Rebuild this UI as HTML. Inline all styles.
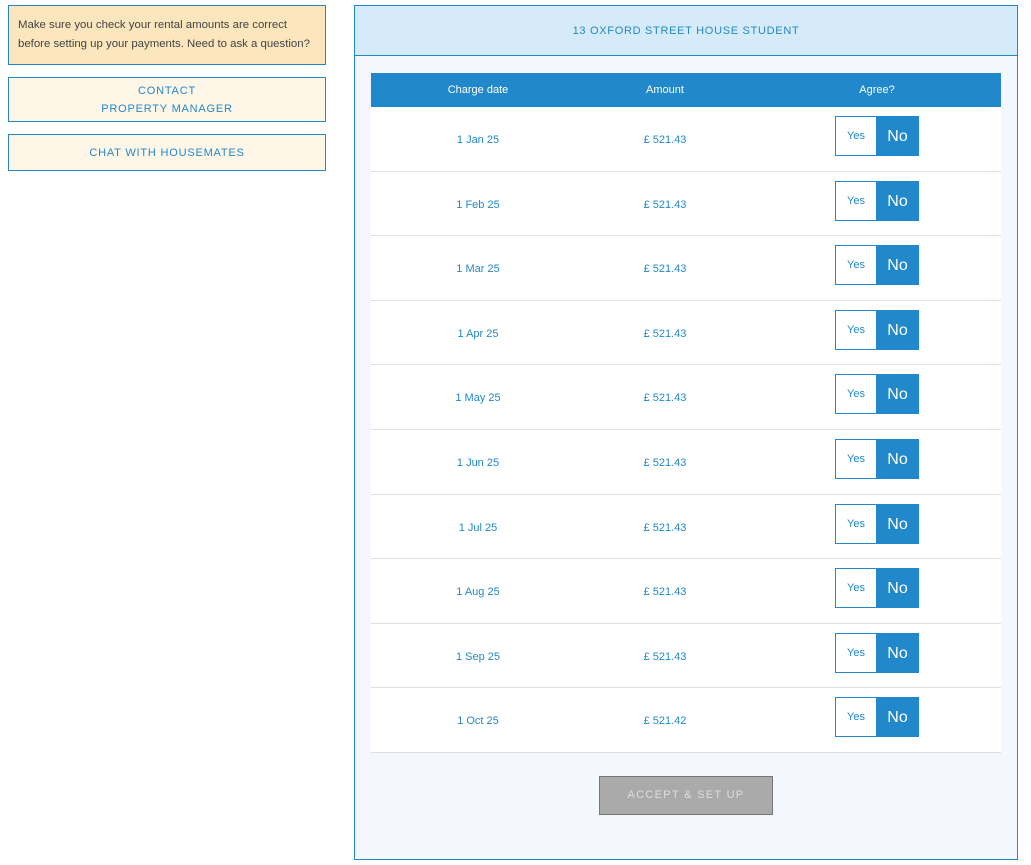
<!DOCTYPE html>
<html><head><meta charset="utf-8"><style>
*{box-sizing:border-box;margin:0;padding:0}
body{width:1031px;height:865px;background:#fff;font-family:"Liberation Sans",sans-serif;position:relative;overflow:hidden}
.a{position:absolute}
.box{border:1px solid #2388cb}
.btn{background:#fef6e7;color:#2388cb;font-size:11px;letter-spacing:0.8px;text-align:center}
.cell{position:absolute;font-size:11px;color:#2388cb;text-align:center}
.row{position:absolute;left:371px;width:630px;background:#fff;border-bottom:1px solid #e0e0e0}
</style></head><body>
<div class="a box" style="left:8px;top:5px;width:318px;height:60px;background:#fbe6bd;padding:10px 0 0 9px;font-size:11.4px;line-height:18.5px;color:#444">Make sure you check your rental amounts are correct<br>before setting up your payments. Need to ask a question?</div>
<div class="a box btn" style="left:8px;top:77px;width:318px;height:45px;padding-top:4px;line-height:18px">CONTACT<br>PROPERTY MANAGER</div>
<div class="a box btn" style="left:8px;top:134px;width:318px;height:37px;line-height:37px">CHAT WITH HOUSEMATES</div>

<div class="a box" style="left:354px;top:5px;width:664px;height:855px;background:#f4f8fe"></div>
<div class="a" style="left:355px;top:6px;width:662px;height:50px;background:#d6ebf9;border-bottom:1px solid #2388cb;text-align:center;line-height:50px;font-size:11px;letter-spacing:0.7px;color:#2388cb">13 OXFORD STREET HOUSE STUDENT</div>
<div class="a" style="left:371px;top:73px;width:630px;height:34px;background:#2188cb;color:#fff;font-size:11px">
<div class="a" style="left:0;width:214px;text-align:center;line-height:34px">Charge date</div>
<div class="a" style="left:214px;width:160px;text-align:center;line-height:34px">Amount</div>
<div class="a" style="left:374px;width:264px;text-align:center;line-height:34px">Agree?</div>
</div>
<div id="rows"></div>
<div class="a" style="left:599px;top:776px;width:174px;height:39px;background:#aaa;border:1px solid #777;color:#ddd;font-size:11px;letter-spacing:1.3px;text-align:center;line-height:37px">ACCEPT &amp; SET UP</div>
<script>
var d=["1 Jan 25","1 Feb 25","1 Mar 25","1 Apr 25","1 May 25","1 Jun 25","1 Jul 25","1 Aug 25","1 Sep 25","1 Oct 25"],h="";
for(var i=0;i<10;i++){var t=Math.round(107+i*64.6);var b=Math.round(107+(i+1)*64.6);var amt=i==9?"£ 521.42":"£ 521.43";
h+='<div class="row" style="top:'+t+'px;height:'+(b-t)+'px"></div>'+
'<div class="cell" style="left:371px;width:214px;top:'+(t+27)+'px">'+d[i]+'</div>'+
'<div class="cell" style="left:585px;width:160px;top:'+(t+27)+'px">'+amt+'</div>'+
'<div class="a" style="left:835px;top:'+(t+9)+'px;width:42px;height:40px;background:#fff;border:1px solid #2388cb;color:#2388cb;font-size:11px;text-align:center;line-height:38px">Yes</div>'+
'<div class="a" style="left:876px;top:'+(t+9)+'px;width:43px;height:40px;background:#2188cb;color:#fff;font-size:16px;text-align:center;line-height:41px">No</div>';}
document.getElementById("rows").innerHTML=h;
</script>
</body></html>
